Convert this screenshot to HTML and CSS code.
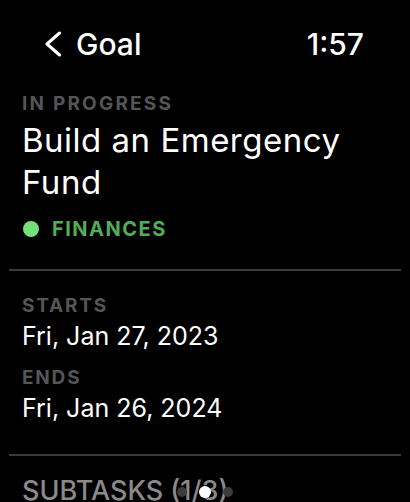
FILE: index.html
```html
<!DOCTYPE html>
<html lang="en">
<head>
<meta charset="utf-8">
<title>Goal</title>
<link rel="stylesheet" href="styles.css">
</head>
<body>
<div class="screen">
  <header class="nav">
    <div class="back">
      <svg class="chevron" width="18" height="26" viewBox="0 0 18 26" aria-hidden="true">
        <polyline points="15.5,2 3,13 15.5,24" fill="none" stroke="#ffffff" stroke-width="3" stroke-linecap="round" stroke-linejoin="round"/>
      </svg>
      <span class="back-label">Goal</span>
    </div>
    <span class="clock">1:57</span>
  </header>

  <section class="summary">
    <div class="label status">IN PROGRESS</div>
    <h1 class="title">Build an Emergency Fund</h1>
    <div class="category"><span class="cat-dot"></span><span class="cat-name">FINANCES</span></div>
  </section>

  <div class="divider"></div>

  <section class="dates">
    <div class="label">STARTS</div>
    <div class="date">Fri, Jan 27, 2023</div>
    <div class="label ends">ENDS</div>
    <div class="date">Fri, Jan 26, 2024</div>
  </section>

  <div class="divider second"></div>

  <section class="subtasks">
    <div class="subtasks-title">SUBTASKS (1/3)</div>
  </section>

  <div class="page-dots">
    <span class="pdot"></span>
    <span class="pdot active"></span>
    <span class="pdot"></span>
  </div>
</div>
</body>
</html>
```

FILE: styles.css
```css
html, body {
  margin: 0;
  padding: 0;
  background: #000;
}
body {
  font-family: Inter, "Noto Sans", "Liberation Sans", sans-serif;
  color: #fff;
  width: 410px;
  height: 502px;
  overflow: hidden;
}
.screen {
  position: relative;
  width: 410px;
  height: 502px;
  overflow: hidden;
}
.nav {
  display: flex;
  justify-content: space-between;
  align-items: center;
  padding: 26px 46px 0 44px;
  height: 36px;
}
.back {
  display: flex;
  align-items: center;
  gap: 14px;
}
.chevron {
  display: block;
}
.back-label {
  font-size: 30px;
  line-height: 36px;
  font-weight: 500;
}
.clock {
  font-size: 30px;
  line-height: 36px;
  font-weight: 500;
}
.summary {
  padding: 30px 22px 0 22px;
}
.label {
  font-size: 19px;
  line-height: 24px;
  font-weight: 700;
  letter-spacing: 1.8px;
  color: #555555;
}
.status {
  letter-spacing: 2.2px;
}
.title {
  margin: 3px 0 0 0;
  font-size: 33px;
  line-height: 42px;
  font-weight: 400;
  letter-spacing: 0.5px;
  color: #fff;
}
.category {
  display: flex;
  align-items: center;
  gap: 13px;
  margin-top: 14px;
  height: 24px;
}
.cat-dot {
  width: 16px;
  height: 16px;
  border-radius: 50%;
  background: #75e079;
  margin-left: 1px;
}
.cat-name {
  font-size: 20px;
  line-height: 24px;
  font-weight: 700;
  letter-spacing: 1.5px;
  color: #52ad58;
}
.divider {
  height: 2px;
  background: #3a3a3a;
  margin: 28px 9px 0 9px;
}
.dates {
  padding: 23px 22px 0 22px;
}
.date {
  margin-top: 2px;
  font-size: 25px;
  line-height: 32px;
  font-weight: 400;
  color: #fff;
}
.ends {
  margin-top: 14px;
}
.divider.second {
  margin-top: 30px;
}
.subtasks {
  padding: 19px 22px 0 22px;
}
.subtasks-title {
  font-size: 27px;
  line-height: 32px;
  font-weight: 500;
  color: #8a8a8a;
}
.page-dots {
  position: absolute;
  left: 177px;
  top: 486px;
  display: flex;
  align-items: center;
  gap: 12px;
}
.pdot {
  width: 10px;
  height: 10px;
  border-radius: 50%;
  background: #3c3c3c;
}
.pdot.active {
  width: 12px;
  height: 12px;
  background: #fff;
}
```
